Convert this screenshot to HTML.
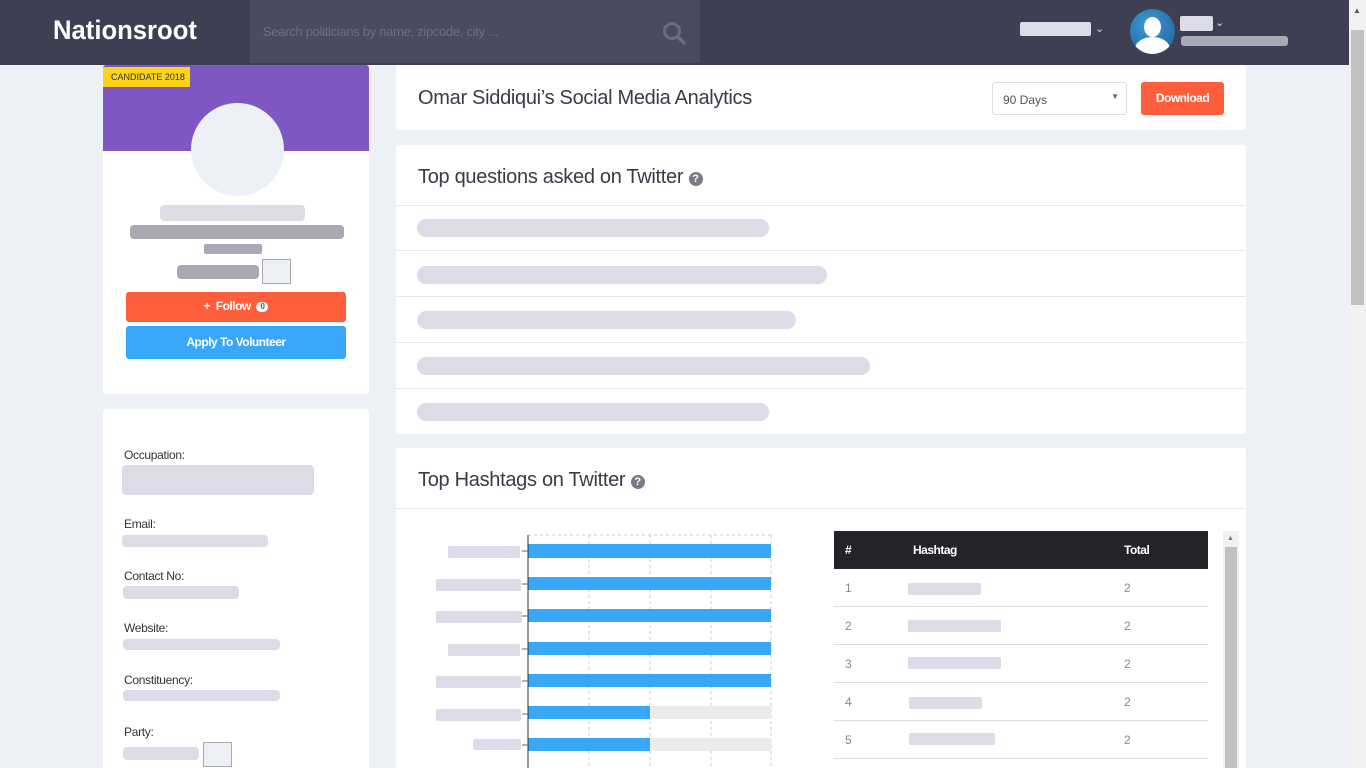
<!DOCTYPE html><html style="overflow:hidden;height:768px"><head><meta charset="utf-8"><style>
*{box-sizing:border-box;margin:0;padding:0}
body{width:1366px;height:768px;overflow:hidden;background:#edf1f5;font-family:"Liberation Sans",sans-serif;position:relative}
.a{position:absolute}
.sk{position:absolute;background:#dcdce8;border-radius:4px}
.dk{position:absolute;background:#a9a9b6;border-radius:4px}
.card{position:absolute;background:#fff;border-radius:3px}
.lbl{position:absolute;left:21px;font-size:12px;color:#333;letter-spacing:-.3px}
.row{position:absolute;left:0;right:0;border-top:1px solid #e6e6ec;height:46px}
</style></head><body>
<div class="a" style="left:0;top:0;width:1349px;height:65px;background:#3f3f54"></div>
<div class="a" style="left:53px;top:15px;font-size:27px;font-weight:bold;color:#fff;letter-spacing:0px;transform:scaleX(0.95);transform-origin:left">Nationsroot</div>
<div class="a" style="left:250px;top:0;width:450px;height:63px;background:#4a4a60"></div>
<div class="a" style="left:263px;top:24px;font-size:13px;color:#6e6e84;letter-spacing:-.3px">Search politicians by name, zipcode, city ...</div>
<svg class="a" style="left:661px;top:20px" width="26" height="26"><circle cx="11" cy="11" r="7.5" fill="none" stroke="#6b6b80" stroke-width="3"/><path d="M16.5 16.5L23 23" stroke="#6b6b80" stroke-width="3.5" stroke-linecap="round"/></svg>
<div class="a" style="left:1020px;top:22px;width:71px;height:14px;background:#dcdce8;border-radius:2px"></div>
<div class="a" style="left:1095px;top:22px;color:#ddd;font-size:11px">⌄</div>
<div class="a" style="left:1130px;top:9px;width:45px;height:45px;border-radius:50%;background:radial-gradient(circle at 40% 35%,#3d9ad4,#1d5f93);overflow:hidden">
<div class="a" style="left:14px;top:8px;width:17px;height:20px;border-radius:50%;background:#fff"></div>
<div class="a" style="left:5px;top:28px;width:35px;height:24px;border-radius:50% 50% 0 0;background:#fff"></div></div>
<div class="a" style="left:1180px;top:16px;width:33px;height:15px;background:#dcdce8;border-radius:2px"></div>
<div class="a" style="left:1215px;top:16px;color:#ddd;font-size:11px">⌄</div>
<div class="a" style="left:1181px;top:36px;width:107px;height:10px;background:#a9a9b6;border-radius:3px"></div>
<div class="a" style="left:1349px;top:0;width:17px;height:768px;background:#f1f1f1"></div>
<div class="a" style="left:1351px;top:30px;width:13px;height:275px;background:#c1c1c1"></div>
<div class="a" style="left:1353px;top:6px;font-size:8px;color:#555">▲</div>

<div class="card" style="left:103px;top:65px;width:266px;height:329px;overflow:hidden">
<div class="a" style="left:0;top:0;width:266px;height:86px;background:#7e57c2"></div>
<div class="a" style="left:0;top:2px;width:87px;height:20px;background:#fad418;font-size:9px;color:#333;padding:5px 0 0 8px">CANDIDATE 2018</div>
<div class="a" style="left:88px;top:38px;width:93px;height:93px;border-radius:50%;background:#edf1f5"></div>
<div class="sk" style="left:57px;top:140px;width:145px;height:16px"></div>
<div class="dk" style="left:27px;top:160px;width:214px;height:14px"></div>
<div class="dk" style="left:101px;top:179px;width:58px;height:10px;border-radius:2px"></div>
<div class="dk" style="left:74px;top:200px;width:82px;height:14px"></div>
<div class="a" style="left:159px;top:194px;width:29px;height:25px;background:#edf1f5;border:1px solid #aaa"></div>
<div class="a" style="left:23px;top:227px;width:220px;height:30px;background:#ff5e3a;border-radius:3px;color:#fff;font-size:12px;font-weight:bold;text-align:center;line-height:29px;letter-spacing:-.5px">+&nbsp; Follow &nbsp;<span style="display:inline-block;background:#fff;color:#555;border-radius:6px;font-size:8px;line-height:10px;padding:0 4px;vertical-align:1px">0</span></div>
<div class="a" style="left:23px;top:261px;width:220px;height:33px;background:#38a7f9;border-radius:3px;color:#fff;font-size:12px;font-weight:bold;text-align:center;line-height:32px;letter-spacing:-.5px">Apply To Volunteer</div>
</div>

<div class="card" style="left:103px;top:409px;width:266px;height:380px">
<div class="lbl" style="top:39px">Occupation:</div><div class="sk" style="left:19px;top:56px;width:192px;height:30px"></div>
<div class="lbl" style="top:108px">Email:</div><div class="sk" style="left:19px;top:126px;width:146px;height:12px"></div>
<div class="lbl" style="top:160px">Contact No:</div><div class="sk" style="left:20px;top:177px;width:116px;height:13px"></div>
<div class="lbl" style="top:212px">Website:</div><div class="sk" style="left:20px;top:230px;width:157px;height:11px"></div>
<div class="lbl" style="top:264px">Constituency:</div><div class="sk" style="left:20px;top:281px;width:157px;height:11px"></div>
<div class="lbl" style="top:316px">Party:</div><div class="sk" style="left:20px;top:338px;width:76px;height:13px"></div>
<div class="a" style="left:100px;top:333px;width:29px;height:25px;background:#edf1f5;border:1px solid #aaa"></div>
</div>

<div class="card" style="left:396px;top:65px;width:850px;height:65px">
<div class="a" style="left:22px;top:22px;font-size:20px;color:#3a3a48;letter-spacing:-.3px">Omar Siddiqui’s Social Media Analytics</div>
<div class="a" style="left:596px;top:17px;width:135px;height:33px;border:1px solid #ddd;border-radius:3px;font-size:12px;color:#555;padding:10px 0 0 10px">90 Days<span style="position:absolute;right:7px;top:9px;font-size:8px;color:#666">▼</span></div>
<div class="a" style="left:745px;top:17px;width:83px;height:33px;background:#ff5e3a;border-radius:3px;color:#fff;font-size:12px;font-weight:bold;text-align:center;line-height:33px;letter-spacing:-.5px">Download</div>
</div>

<div class="card" style="left:396px;top:145px;width:850px;height:289px">
<div class="a" style="left:22px;top:21px;font-size:20px;color:#3a3a48;letter-spacing:-.3px">Top questions asked on Twitter <span style="display:inline-block;width:14px;height:14px;border-radius:50%;background:#7a7a88;color:#fff;font-size:11px;font-weight:bold;text-align:center;line-height:14px;vertical-align:1px">?</span></div>
<div class="row" style="top:60px"><div class="sk" style="left:21px;top:13px;width:352px;height:18px;border-radius:9px"></div></div>
<div class="row" style="top:105px"><div class="sk" style="left:21px;top:15px;width:410px;height:18px;border-radius:9px"></div></div>
<div class="row" style="top:151px"><div class="sk" style="left:21px;top:14px;width:379px;height:18px;border-radius:9px"></div></div>
<div class="row" style="top:197px"><div class="sk" style="left:21px;top:14px;width:453px;height:18px;border-radius:9px"></div></div>
<div class="row" style="top:243px"><div class="sk" style="left:21px;top:14px;width:352px;height:18px;border-radius:9px"></div></div>
</div>

<div class="card" style="left:396px;top:448px;width:850px;height:340px">
<div class="a" style="left:22px;top:21px;font-size:20px;color:#3a3a48;letter-spacing:-.3px">Top Hashtags on Twitter <span style="display:inline-block;width:14px;height:14px;border-radius:50%;background:#7a7a88;color:#fff;font-size:11px;font-weight:bold;text-align:center;line-height:14px;vertical-align:1px">?</span></div>
<div class="a" style="left:0;top:60px;width:850px;border-top:1px solid #e6e6ec"></div>
</div>

<svg class="a" style="left:420px;top:530px" width="360" height="238">
<g stroke="#ccc" stroke-dasharray="3,3"><line x1="108" y1="5" x2="351" y2="5"/><line x1="169" y1="5" x2="169" y2="238"/><line x1="230" y1="5" x2="230" y2="238"/><line x1="291" y1="5" x2="291" y2="238"/><line x1="351" y1="5" x2="351" y2="238"/></g>
<g fill="#ececec"><rect x="230" y="176" width="121" height="13"/><rect x="230" y="208" width="121" height="13"/></g>
<g fill="#38a7f9"><rect x="108" y="14" width="243" height="14"/><rect x="108" y="47" width="243" height="13"/><rect x="108" y="79" width="243" height="13"/><rect x="108" y="112" width="243" height="13"/><rect x="108" y="144" width="243" height="13"/><rect x="108" y="176" width="122" height="13"/><rect x="108" y="208" width="122" height="13"/></g>
<line x1="108" y1="5" x2="108" y2="238" stroke="#333"/>
<g fill="#dcdce8"><rect x="28" y="16" width="72" height="12" rx="2"/><rect x="16" y="49" width="85" height="12" rx="2"/><rect x="16" y="81" width="86" height="12" rx="2"/><rect x="28" y="114" width="72" height="12" rx="2"/><rect x="16" y="146" width="85" height="12" rx="2"/><rect x="16" y="179" width="85" height="12" rx="2"/><rect x="53" y="209" width="48" height="11" rx="2"/></g>
<g stroke="#666"><line x1="102" y1="21" x2="108" y2="21"/><line x1="102" y1="54" x2="108" y2="54"/><line x1="102" y1="86" x2="108" y2="86"/><line x1="102" y1="119" x2="108" y2="119"/><line x1="102" y1="151" x2="108" y2="151"/><line x1="102" y1="184" x2="108" y2="184"/><line x1="102" y1="215" x2="108" y2="215"/></g>
</svg>

<div class="a" style="left:834px;top:531px;width:374px;height:38px;background:#222428;color:#fff;font-size:12px;font-weight:bold;letter-spacing:-.5px">
<span class="a" style="left:11px;top:12px">#</span><span class="a" style="left:79px;top:12px">Hashtag</span><span class="a" style="left:290px;top:12px">Total</span></div>
<div class="a" style="left:834px;top:569px;width:374px;font-size:12px;color:#888">
<div style="position:relative;height:38px;border-bottom:1px solid #ddd"><span class="a" style="left:11px;top:12px">1</span><div class="sk" style="left:74px;top:14px;width:73px;height:12px;border-radius:2px"></div><span class="a" style="left:290px;top:12px">2</span></div>
<div style="position:relative;height:38px;border-bottom:1px solid #ddd"><span class="a" style="left:11px;top:12px">2</span><div class="sk" style="left:74px;top:13px;width:93px;height:12px;border-radius:2px"></div><span class="a" style="left:290px;top:12px">2</span></div>
<div style="position:relative;height:38px;border-bottom:1px solid #ddd"><span class="a" style="left:11px;top:12px">3</span><div class="sk" style="left:74px;top:12px;width:93px;height:12px;border-radius:2px"></div><span class="a" style="left:290px;top:12px">2</span></div>
<div style="position:relative;height:38px;border-bottom:1px solid #ddd"><span class="a" style="left:11px;top:12px">4</span><div class="sk" style="left:75px;top:14px;width:73px;height:12px;border-radius:2px"></div><span class="a" style="left:290px;top:12px">2</span></div>
<div style="position:relative;height:38px;border-bottom:1px solid #ddd"><span class="a" style="left:11px;top:12px">5</span><div class="sk" style="left:75px;top:12px;width:86px;height:12px;border-radius:2px"></div><span class="a" style="left:290px;top:12px">2</span></div>
</div>
<div class="a" style="left:1223px;top:531px;width:16px;height:237px;background:#f1f1f1"></div>
<div class="a" style="left:1225px;top:547px;width:12px;height:221px;background:#c1c1c1"></div>
<div class="a" style="left:1227px;top:535px;font-size:7px;color:#777">▲</div>
</body></html>
